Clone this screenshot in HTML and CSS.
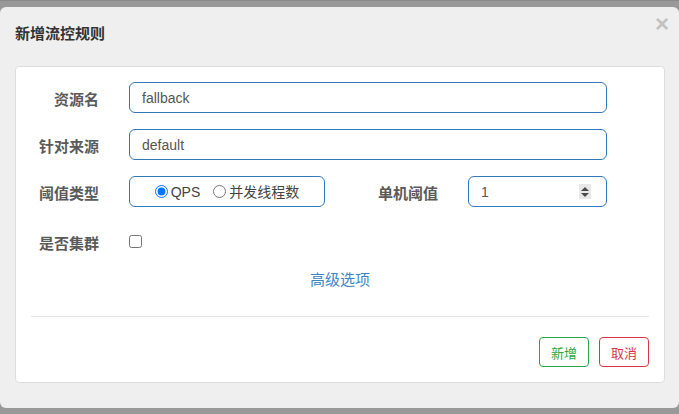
FILE: index.html
```html
<!DOCTYPE html>
<html lang="zh-CN">
<head>
<meta charset="utf-8">
<title>新增流控规则</title>
<link rel="stylesheet" href="styles.css">
</head>
<body>
<div class="dialog">
  <div class="dialog-header">
    <h4 class="dialog-title">新增流控规则</h4>
    <span class="close">×</span>
  </div>
  <div class="card">
    <form class="form">
      <div class="row">
        <label class="label">资源名</label>
        <input class="field field-wide" type="text" value="fallback">
      </div>
      <div class="row">
        <label class="label">针对来源</label>
        <input class="field field-wide" type="text" value="default">
      </div>
      <div class="row row-type">
        <label class="label">阈值类型</label>
        <div class="field radio-group">
          <label class="radio"><input type="radio" name="grade" checked>QPS</label>
          <label class="radio"><input type="radio" name="grade">并发线程数</label>
        </div>
        <label class="label label-2">单机阈值</label>
        <div class="field number">
          <input class="number-input" type="text" value="1">
          <span class="spinner"><span class="tri up"></span><span class="tri down"></span></span>
        </div>
      </div>
      <div class="row row-check">
        <label class="label">是否集群</label>
        <input type="checkbox" class="checkbox">
      </div>
      <div class="advanced"><a href="#">高级选项</a></div>
    </form>
    <hr class="divider">
    <div class="actions">
      <button class="btn btn-ok" type="button">新增</button>
      <button class="btn btn-cancel" type="button">取消</button>
    </div>
  </div>
</div>
</body>
</html>
```
FILE: styles.css
```css
html, body {
  margin: 0;
  padding: 0;
}
body {
  background: #999;
  font-family: "Liberation Sans", "Noto Sans CJK SC", sans-serif;
  width: 679px;
  height: 414px;
  overflow: hidden;
  border-top: 1px solid #8a8a8a;
  box-sizing: border-box;
  padding-top: 6px;
}
.dialog {
  background: #efefef;
  border-radius: 6px;
  height: 401px;
  box-sizing: border-box;
  padding: 0 14px 0 15px;
}
.dialog-header {
  height: 59px;
  display: flex;
  justify-content: space-between;
  align-items: flex-start;
}
.dialog-title {
  margin: 17px 0 0 0;
  font-size: 15px;
  line-height: 20px;
  font-weight: bold;
  color: #333;
}
.close {
  margin-top: 7px;
  margin-right: -4px;
  font-size: 24px;
  line-height: 20px;
  font-weight: bold;
  color: #c2c2c2;
}
.card {
  background: #fff;
  border: 1px solid #ddd;
  border-radius: 4px;
  height: 317px;
  box-sizing: border-box;
  padding: 15px 15px 0 15px;
}
.form {
  margin: 0;
}
.row {
  display: flex;
  align-items: center;
  height: 31px;
  margin-bottom: 16px;
}
.row-type {
  margin-bottom: 19px;
}
.row-check {
  margin-bottom: 12px;
}
.label {
  width: 68px;
  flex: none;
  text-align: right;
  font-size: 15px;
  font-weight: bold;
  color: #5a5a5a;
  line-height: 20px;
  padding-top: 5px;
  margin-right: 30px;
}
.label-2 {
  width: 113px;
}
.field {
  box-sizing: border-box;
  height: 31px;
  border: 1px solid #3579bd;
  border-radius: 6px;
  background: #fff;
  font: 14px "Liberation Sans", "Noto Sans CJK SC", sans-serif;
  color: #555;
  padding: 0 12px;
  outline: none;
  flex: none;
}
.field-wide {
  width: 478px;
}
.radio-group {
  width: 196px;
  display: flex;
  align-items: center;
  justify-content: center;
  padding: 0;
}
.radio {
  display: flex;
  align-items: center;
  font-size: 14px;
  color: #444;
  line-height: 20px;
}
.radio + .radio {
  margin-left: 13px;
}
.radio input {
  margin: 0 3px 0 0;
  width: 13px;
  height: 13px;
}
.number {
  width: 139px;
  display: flex;
  align-items: center;
  padding: 0 15px 0 12px;
}
.number-input {
  flex: 1;
  min-width: 0;
  border: 0;
  outline: 0;
  padding: 0;
  font: inherit;
  color: inherit;
  background: transparent;
  height: 100%;
}
.spinner {
  width: 12px;
  height: 15px;
  background: #e8e8e8;
  display: flex;
  flex-direction: column;
  align-items: center;
  justify-content: center;
  gap: 2px;
}
.tri {
  width: 0;
  height: 0;
  border-left: 4px solid transparent;
  border-right: 4px solid transparent;
}
.up {
  border-bottom: 4px solid #4a4a4a;
}
.down {
  border-top: 4px solid #4a4a4a;
}
.checkbox {
  margin: 0;
  width: 13px;
  height: 13px;
}
.advanced {
  text-align: center;
  font-size: 15px;
  line-height: 20px;
  font-family: "Noto Sans CJK SC", sans-serif;
}
.advanced a {
  color: #3b86c6;
  text-decoration: none;
}
.divider {
  border: 0;
  border-top: 1px solid #e5e5e5;
  margin: 27px 0 0 0;
}
.actions {
  display: flex;
  justify-content: flex-end;
  gap: 10px;
  margin-top: 20px;
}
.btn {
  width: 50px;
  height: 30px;
  border: 1px solid;
  border-radius: 4px;
  background: #fff;
  font: 13px "Noto Sans CJK SC", sans-serif;
  padding: 0;
}
.btn-ok {
  color: #28a745;
  border-color: #28a745;
}
.btn-cancel {
  color: #dc3545;
  border-color: #dc3545;
}
```
